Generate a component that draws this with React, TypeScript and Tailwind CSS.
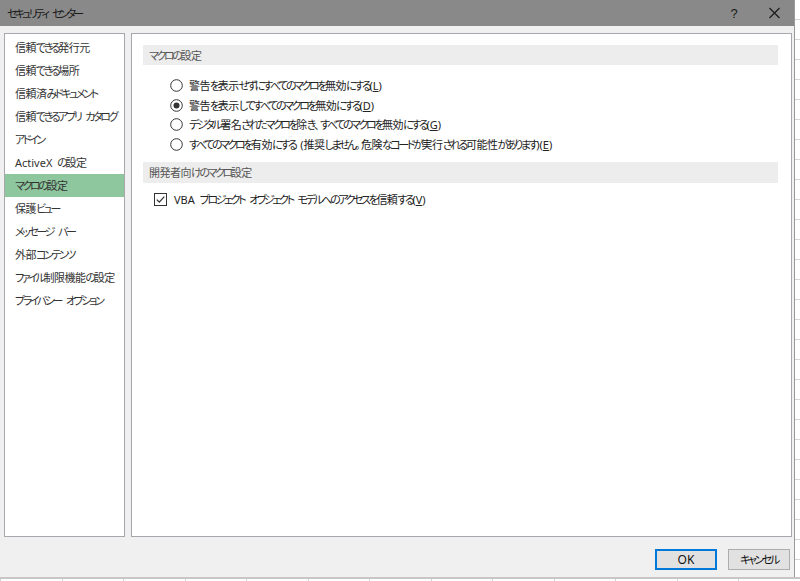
import React from "react";

const font = {
  fontFamily: '"Noto Sans CJK JP", "Noto Sans", "Liberation Sans", sans-serif',
};

const navItems = [
  "信頼できる発行元",
  "信頼できる場所",
  "信頼済みドキュメント",
  "信頼できるアプリ カタログ",
  "アドイン",
  "ActiveX の設定",
  "マクロの設定",
  "保護ビュー",
  "メッセージ バー",
  "外部コンテンツ",
  "ファイル制限機能の設定",
  "プライバシー オプション",
];

const latin = { fontFamily: '"Noto Sans", "Liberation Sans", sans-serif' };

function T({ text, tight }: { text: string; tight?: boolean }) {
  const parts = text
    .split(/([\x00-\x7F]+|[\u4e00-\u9fff]+|[、。]+)/)
    .filter((p) => p.length > 0);
  return (
    <>
      {parts.map((p, i) => {
        if (/^[\x00-\x7F]+$/.test(p))
          return (
            <span key={i} className="tracking-normal whitespace-pre [word-spacing:2px]" style={latin}>
              {p}
            </span>
          );
        if (/^[\u4e00-\u9fff]+$/.test(p))
          return (
            <span key={i} className="tracking-[-0.5px]">
              {p}
            </span>
          );
        if (/^[、。]+$/.test(p))
          return (
            <span key={i} className="[font-feature-settings:'palt'] tracking-[0.5px]">
              {p}
            </span>
          );
        return (
          <span
            key={i}
            className={
              tight
                ? "[font-feature-settings:'palt'] tracking-[-2.8px]"
                : "[font-feature-settings:'palt'] tracking-[-2.4px]"
            }
          >
            {p}
          </span>
        );
      })}
    </>
  );
}

function Radio({ checked }: { checked?: boolean }) {
  return (
    <svg width="13" height="13" viewBox="0 0 13 13" className="shrink-0">
      <circle cx="6.5" cy="6.5" r="5.8" fill="#fff" stroke="#333" strokeWidth="1" />
      {checked && <circle cx="6.5" cy="6.5" r="3" fill="#333" />}
    </svg>
  );
}

function Check() {
  return (
    <svg width="13" height="13" viewBox="0 0 13 13" className="shrink-0">
      <rect x="0.5" y="0.5" width="12" height="12" fill="#fff" stroke="#333" />
      <path d="M2.8 6.6 L5.3 9.1 L10.3 3.6" fill="none" stroke="#333" strokeWidth="1.3" />
    </svg>
  );
}

const jp = "text-[11px] leading-none whitespace-nowrap";

function RadioRow({ checked, text, k }: { checked?: boolean; text: string; k: string }) {
  return (
    <div className="flex items-center h-[19.5px] pl-[27px] gap-[6px]">
      <Radio checked={checked} />
      <span className={`${jp} text-[#222]`}>
        <T text={text} />
        <span style={latin}>
          (<span className="underline">{k}</span>)
        </span>
      </span>
    </div>
  );
}

export default function App() {
  return (
    <div className="w-[800px] h-[581px] bg-white flex flex-col overflow-hidden" style={font}>
      <div className="flex h-[577px]">
        <div className="w-[795px] h-full flex flex-col bg-[#f0f0f0] border-r border-[#9a9a9a]">
          {/* title bar */}
          <div className="h-[26px] bg-[#898989] flex items-center pl-[7px] shrink-0">
            <span className={`${jp} text-[#1a1a1a]`}>
              <T text="セキュリティ センター" tight />
            </span>
            <div className="ml-auto flex items-center">
              <span
                className="text-[13px] text-[#1a1a1a] w-[40px] text-center leading-none"
                style={{ fontFamily: '"Liberation Sans", sans-serif' }}
              >
                ?
              </span>
              <svg width="40" height="26" viewBox="0 0 40 26">
                <path d="M15.5 8 L25.5 18 M25.5 8 L15.5 18" stroke="#1a1a1a" strokeWidth="1.1" />
              </svg>
            </div>
          </div>
          {/* body */}
          <div className="flex-1 flex flex-col pl-[4px] pr-[2px] pt-[7px]">
            <div className="flex gap-[6px] h-[504px]">
              {/* left nav */}
              <div className="w-[121px] h-full bg-white border border-[#a7a7ad] pt-[2px]">
                {navItems.map((t) => (
                  <div
                    key={t}
                    className={`h-[23px] flex items-center pl-[10px] ${jp} ${
                      t === "マクロの設定" ? "bg-[#8ec79e] text-[#333]" : "text-[#333]"
                    }`}
                  >
                    <T text={t} />
                  </div>
                ))}
              </div>
              {/* right content */}
              <div className="flex-1 h-full bg-white border border-[#a7a7ad] pt-[11px] pl-[11px] pr-[13px]">
                <div className="h-[20px] bg-[#ededed] flex items-center pl-[6px]">
                  <span className={`${jp} text-[#555]`}>
                    <T text="マクロの設定" />
                  </span>
                </div>
                <div className="pt-[11px] flex flex-col">
                  <RadioRow text="警告を表示せずにすべてのマクロを無効にする" k="L" />
                  <RadioRow checked text="警告を表示してすべてのマクロを無効にする" k="D" />
                  <RadioRow text="デジタル署名されたマクロを除き、すべてのマクロを無効にする" k="G" />
                  <RadioRow
                    text="すべてのマクロを有効にする (推奨しません。危険なコードが実行される可能性があります)"
                    k="E"
                  />
                </div>
                <div className="h-[21px] bg-[#ededed] flex items-center pl-[6px] mt-[8px]">
                  <span className={`${jp} text-[#555]`}>
                    <T text="開発者向けのマクロ設定" />
                  </span>
                </div>
                <div className="flex items-center h-[20px] mt-[6px] pl-[11px] gap-[7px]">
                  <Check />
                  <span className={`${jp} text-[#222]`}>
                    <T text="VBA プロジェクト オブジェクト モデルへのアクセスを信頼する" />
                    <span style={latin}>
                      (<span className="underline">V</span>)
                    </span>
                  </span>
                </div>
              </div>
            </div>
            {/* buttons */}
            <div className="flex justify-end gap-[11px] mt-[12px] pr-[2px]">
              <button
                className="w-[62px] h-[21px] bg-[#e1e1e1] border-2 border-[#0078d7] text-[12px] text-[#111] leading-none flex items-center justify-center"
                style={latin}
              >
                OK
              </button>
              <button className="w-[62px] h-[21px] bg-[#e1e1e1] border border-[#adadad] text-[#111] flex items-center justify-center">
                <span className={jp}>
                  <T text="キャンセル" />
                </span>
              </button>
            </div>
          </div>
        </div>
        <div className="flex-1 flex flex-col">
          {Array.from({ length: 28 }).map((_, i) => (
            <div key={i} className="h-[20px] border-b border-[#d4d4d4]" />
          ))}
        </div>
      </div>
      <div className="flex-1 flex border-t-2 border-[#c6c6c6]">
        <div className="w-[24px] border-r border-[#d4d4d4]" />
        {Array.from({ length: 13 }).map((_, i) => (
          <div key={i} className="w-[61.5px] shrink-0 border-r border-[#d4d4d4]" />
        ))}
      </div>
    </div>
  );
}
